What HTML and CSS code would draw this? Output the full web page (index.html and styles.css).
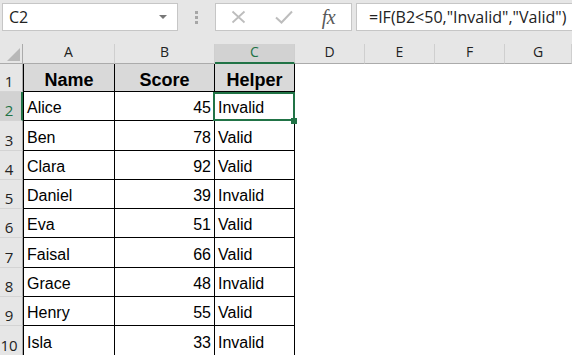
FILE: index.html
```html
<!DOCTYPE html>
<html>
<head>
<meta charset="utf-8">
<link rel="stylesheet" href="styles.css">
</head>
<body>
<div class="toolbar">
  <div class="namebox"><span class="ref">C2</span><span class="drop"></span></div>
  <div class="grip"><i></i><i></i><i></i></div>
  <div class="fbox">
    <span class="slot"><svg width="15" height="14" viewBox="0 0 15 14"><path d="M1.5 1.5 L13.5 12.5 M13.5 1.5 L1.5 12.5" stroke="#bdbdbd" stroke-width="1.8" fill="none"/></svg></span>
    <span class="slot"><svg width="18" height="14" viewBox="0 0 18 14"><path d="M1 7.5 L6.5 12.5 L17 1.5" stroke="#bdbdbd" stroke-width="2" fill="none"/></svg></span>
    <span class="slot fx">fx</span>
  </div>
  <div class="formula">=IF(B2&lt;50,"Invalid","Valid")</div>
</div>
<div class="sheet">
  <div class="corner"><span class="tri"></span></div>
  <div class="ch">A</div><div class="ch">B</div><div class="ch sel">C</div><div class="ch">D</div><div class="ch">E</div><div class="ch">F</div><div class="ch">G</div>

  <div class="rh">1</div><div class="c a hd">Name</div><div class="c hd">Score</div><div class="c hd">Helper</div><div class="fill"></div>
  <div class="rh sel">2</div><div class="c a">Alice</div><div class="c num">45</div><div class="c active">Invalid</div><div class="fill"></div>
  <div class="rh">3</div><div class="c a">Ben</div><div class="c num">78</div><div class="c">Valid</div><div class="fill"></div>
  <div class="rh">4</div><div class="c a">Clara</div><div class="c num">92</div><div class="c">Valid</div><div class="fill"></div>
  <div class="rh">5</div><div class="c a">Daniel</div><div class="c num">39</div><div class="c">Invalid</div><div class="fill"></div>
  <div class="rh">6</div><div class="c a">Eva</div><div class="c num">51</div><div class="c">Valid</div><div class="fill"></div>
  <div class="rh">7</div><div class="c a">Faisal</div><div class="c num">66</div><div class="c">Valid</div><div class="fill"></div>
  <div class="rh">8</div><div class="c a">Grace</div><div class="c num">48</div><div class="c">Invalid</div><div class="fill"></div>
  <div class="rh">9</div><div class="c a">Henry</div><div class="c num">55</div><div class="c">Valid</div><div class="fill"></div>
  <div class="rh">10</div><div class="c a">Isla</div><div class="c num">33</div><div class="c">Invalid</div><div class="fill"></div>
</div>
</body>
</html>
```
FILE: styles.css
```css
html, body {
  margin: 0;
  padding: 0;
  background: #ffffff;
  overflow: hidden;
}
body {
  width: 572px;
  height: 355px;
}
.toolbar {
  height: 44px;
  box-sizing: border-box;
  background: #e6e6e6;
  display: flex;
  align-items: flex-start;
  padding-top: 3px;
}
.namebox {
  margin-left: 2px;
  width: 176px;
  height: 28px;
  box-sizing: border-box;
  background: #fff;
  border: 1px solid #c6c6c6;
  display: flex;
  align-items: center;
  justify-content: space-between;
  padding: 0 10px 0 6px;
  font: 16px "Open Sans", sans-serif;
  color: #222;
}
.drop {
  width: 0;
  height: 0;
  border-left: 4px solid transparent;
  border-right: 4px solid transparent;
  border-top: 4px solid #777;
}
.grip {
  margin-left: 17px;
  margin-top: 8px;
  display: flex;
  flex-direction: column;
  gap: 2px;
}
.grip i {
  display: block;
  width: 3px;
  height: 3px;
  background: #a6a6a6;
}
.fbox {
  margin-left: 17px;
  width: 137px;
  height: 28px;
  box-sizing: border-box;
  background: #fff;
  border: 1px solid #c6c6c6;
  display: flex;
  align-items: center;
}
.slot {
  width: 45px;
  display: flex;
  justify-content: center;
  align-items: center;
}
.slot svg { display: block; }
.fx {
  font: italic 20px "Liberation Serif", serif;
  color: #595959;
  letter-spacing: -0.5px;
}
.formula {
  margin-left: 4px;
  flex: 1;
  height: 28px;
  box-sizing: border-box;
  background: #fff;
  border: 1px solid #c6c6c6;
  border-right: none;
  padding-left: 12px;
  display: flex;
  align-items: center;
  font: 16px "Open Sans", sans-serif;
  color: #222;
  white-space: nowrap;
}
.sheet {
  display: grid;
  grid-template-columns: 23px 92px 100px 80px 70px 70px 70px 67px;
  grid-template-rows: 20px 28px repeat(9, 29.3px);
}
.sheet > div {
  box-sizing: border-box;
}
.corner {
  background: #e6e6e6;
  border-right: 1px solid #ababab;
  border-bottom: 1px solid #ababab;
  display: flex;
  justify-content: flex-end;
  align-items: flex-end;
  padding: 0 2px 2px 0;
}
.tri {
  display: block;
  width: 13px;
  height: 13px;
  background: #b8b8b8;
  clip-path: polygon(100% 0, 100% 100%, 0 100%);
}
.ch {
  background: #e6e6e6;
  border-right: 1px solid #cfcfcf;
  border-bottom: 1px solid #ababab;
  font: 14px/1 "Open Sans", sans-serif;
  color: #222;
  display: flex;
  justify-content: center;
  align-items: flex-end;
  padding-bottom: 4px;
}
.ch.sel {
  background: #d2d2d2;
  color: #217346;
  border-bottom: 2px solid #217346;
  padding-bottom: 3px;
}
.rh {
  background: #e6e6e6;
  border-right: 1px solid #ababab;
  border-bottom: 1px solid #d4d4d4;
  font: 15px/1 "Open Sans", sans-serif;
  color: #222;
  display: flex;
  justify-content: center;
  align-items: flex-end;
  padding: 0 4px 2px 0;
}
.rh.sel {
  background: #d2d2d2;
  color: #217346;
  border-right: 2px solid #217346;
  padding-right: 3px;
}
.c {
  background: #fff;
  border-right: 1px solid #000;
  border-bottom: 1px solid #000;
  font: 16px "Liberation Sans", Arial, sans-serif;
  color: #000;
  display: flex;
  align-items: flex-end;
  padding: 0 3px 3px 3px;
  white-space: nowrap;
}
.c.a {
  border-left: 1px solid #000;
}
.c.num {
  justify-content: flex-end;
  padding-right: 3px;
}
.c.hd {
  background: #d9d9d9;
  font-weight: bold;
  font-size: 18px;
  justify-content: center;
  padding-bottom: 0;
}
.fill {
  grid-column: span 4;
  background: #fff;
}
.c.active {
  position: relative;
}
.c.active::after {
  content: "";
  position: absolute;
  left: -2px;
  top: 0;
  right: -1px;
  bottom: -1px;
  border: 2px solid #217346;
}
.c.active::before {
  content: "";
  position: absolute;
  right: -3px;
  bottom: -4px;
  width: 6px;
  height: 6px;
  background: #217346;
  z-index: 2;
}
```
